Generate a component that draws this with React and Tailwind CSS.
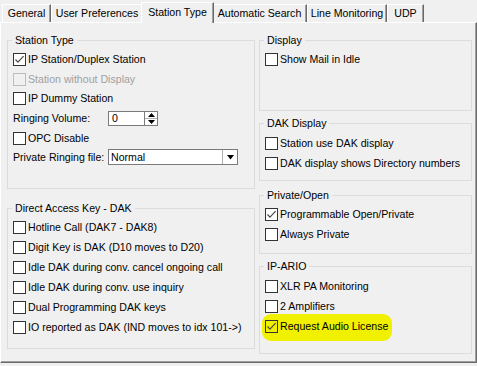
const tabs = [
  { label: "General", w: "w-[49px]" },
  { label: "User Preferences", w: "w-[92px]" },
  { label: "Station Type", w: "w-[73px]", active: true },
  { label: "Automatic Search", w: "w-[95px]" },
  { label: "Line Monitoring", w: "w-[80px]" },
  { label: "UDP", w: "w-[37px]" },
];

const Check = ({ checked, disabled, clear }) => (
  <span
    className={`mt-[4px] w-[13px] h-[13px] shrink-0 border flex items-center justify-center ${
      disabled ? "border-[#bcbcbc] bg-[#f0f0f0]" : clear ? "border-[#333333]" : "border-[#333333] bg-white"
    }`}
  >
    {checked && (
      <svg width="11" height="11" viewBox="0 0 11 11">
        <path d="M1.5 5.5 L4 8.2 L9.6 2.2" fill="none" stroke="#4a4a4a" strokeWidth="1.2" />
      </svg>
    )}
  </span>
);

const Row = ({ label, checked, disabled }) => (
  <div className="flex h-[20px] leading-[20px]">
    <Check checked={checked} disabled={disabled} />
    <span className={`ml-[2px] whitespace-nowrap ${disabled ? "text-[#a0a0a0]" : ""}`}>{label}</span>
  </div>
);

const Group = ({ title, className, children, rows = "mt-[2px]" }) => (
  <div className={`border border-[#dcdcdc] ${className}`}>
    <div className="w-fit ml-[4px] px-[3px] -mt-[7px] leading-[13px] bg-[#f0f0f0]">{title}</div>
    <div className={`pl-[5px] ${rows}`}>{children}</div>
  </div>
);

export default function App() {
  return (
    <div className="w-[477px] h-[366px] bg-[#f0f0f0] text-black text-[10.6px] font-['Liberation_Sans',Arial,sans-serif] overflow-hidden">
      {/* tab strip */}
      <div className="flex items-end h-[22px] pl-[2px]">
        {tabs.map((t) =>
          t.active ? (
            <div
              key={t.label}
              className={`${t.w} h-[21px] -mx-[2px] -mb-px relative z-10 bg-[#f0f0f0] border-l border-t border-r border-l-white border-t-white border-r-[#696969] shadow-[inset_-1px_0_0_#a0a0a0] flex items-center justify-center whitespace-nowrap`}
            >
              {t.label}
            </div>
          ) : (
            <div
              key={t.label}
              className={`${t.w} h-[18px] border-l border-t border-r border-l-white border-t-white border-r-[#696969] shadow-[inset_-1px_0_0_#a0a0a0] flex items-center justify-center whitespace-nowrap`}
            >
              {t.label}
            </div>
          )
        )}
      </div>

      {/* page */}
      <div className="h-[341px] w-[477px] border border-l-white border-t-white border-r-[#696969] border-b-[#696969] shadow-[inset_-1px_-1px_0_#a0a0a0] flex gap-[4px] pl-[6px] pt-[17px]">
        <div className="flex flex-col w-[248px]">
          <Group title="Station Type" className="h-[149px]">
            <Row label="IP Station/Duplex Station" checked />
            <Row label="Station without Display" disabled />
            <div className="flex h-[19px] leading-[20px]">
              <span className="mt-[3px] w-[13px] h-[13px] shrink-0 border border-[#333333] bg-white" />
              <span className="ml-[2px] -mt-px">IP Dummy Station</span>
            </div>
            <div className="flex h-[20px] leading-[20px]">
              <span className="w-[95px]">Ringing Volume:</span>
              <div className="mt-[3px] flex h-[15px] w-[50px]">
                <div className="flex-1 border border-[#7a7a7a] bg-white pl-[3px] leading-[13px]">0</div>
                <div className="w-[13px] flex flex-col border border-l-0 border-[#7a7a7a] bg-white">
                  <div className="flex-1 flex items-center justify-center border-b border-[#adadad]">
                    <svg width="7" height="4" viewBox="0 0 7 4">
                      <path d="M0 4 L3.5 0 L7 4Z" fill="#000" />
                    </svg>
                  </div>
                  <div className="flex-1 flex items-center justify-center">
                    <svg width="7" height="4" viewBox="0 0 7 4">
                      <path d="M0 0 L7 0 L3.5 4Z" fill="#000" />
                    </svg>
                  </div>
                </div>
              </div>
            </div>
            <Row label="OPC Disable" />
            <div className="flex h-[20px] leading-[20px]">
              <span className="w-[95px] -mt-px">Private Ringing file:</span>
              <div className="mt-[1px] flex h-[16px] w-[130px] border border-[#7a7a7a] bg-white">
                <div className="flex-1 pl-[2px] leading-[14px]">Normal</div>
                <div className="w-[15px] border-l border-[#adadad] flex items-center justify-center">
                  <svg width="7" height="5" viewBox="0 0 7 5">
                    <path d="M0 0 L7 0 L3.5 4.5Z" fill="#000" />
                  </svg>
                </div>
              </div>
            </div>
          </Group>

          <Group title="Direct Access Key - DAK" className="mt-[19px] h-[141px]">
            <Row label="Hotline Call (DAK7 - DAK8)" />
            <Row label="Digit Key is DAK (D10 moves to D20)" />
            <Row label="Idle DAK during conv. cancel ongoing call" />
            <Row label="Idle DAK during conv. use inquiry" />
            <Row label="Dual Programming DAK keys" />
            <Row label="IO reported as DAK (IND moves to idx 101->)" />
          </Group>
        </div>

        <div className="flex flex-col w-[213px]">
          <Group title="Display" className="h-[71px]">
            <Row label="Show Mail in Idle" />
          </Group>
          <Group title="DAK Display" className="mt-[12px] h-[58px]" rows="mt-[3px]">
            <Row label="Station use DAK display" />
            <Row label="DAK display shows Directory numbers" />
          </Group>
          <Group title="Private/Open" className="mt-[14px] h-[59px]">
            <Row label="Programmable Open/Private" checked />
            <Row label="Always Private" />
          </Group>
          <Group title="IP-ARIO" className="mt-[12px] h-[88px]" rows="mt-[3px]">
            <Row label="XLR PA Monitoring" />
            <Row label="2 Amplifiers" />
            <div className="flex h-[20px] leading-[20px]">
              <div className="flex -ml-[3px] pl-[3px] pr-[4px] -mt-[2px] pt-[2px] -mb-[5px] pb-[5px] rounded-[9px] bg-[#f0f000]">
                <Check checked clear />
                <span className="ml-[2px] whitespace-nowrap">Request Audio License</span>
              </div>
            </div>
          </Group>
        </div>
      </div>
    </div>
  );
}
